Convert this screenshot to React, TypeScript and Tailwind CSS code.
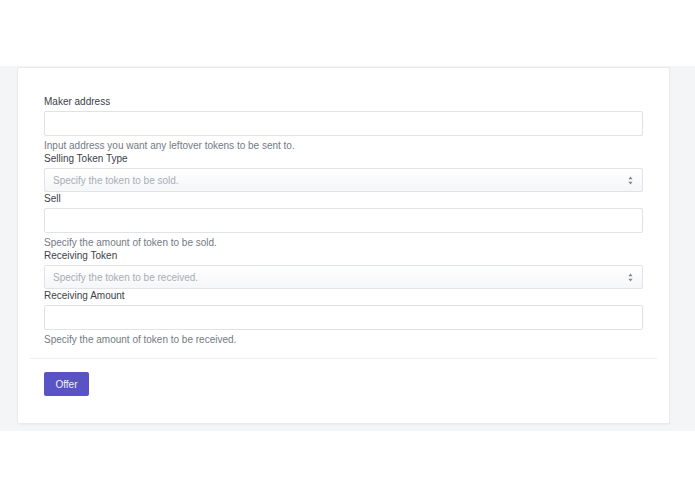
import React from "react";

function Arrows() {
  return (
    <svg width="5" height="9" viewBox="0 0 5 9" className="shrink-0">
      <path d="M2.5 0.5 L4.6 3.3 H0.4 Z" fill="#80858c" />
      <path d="M2.5 8.5 L4.6 5.7 H0.4 Z" fill="#80858c" />
    </svg>
  );
}

function Label({ children }: { children: React.ReactNode }) {
  return <div className="text-[10px] leading-[13px] text-[#3b4148] mb-[3px]">{children}</div>;
}

function Help({ children }: { children: React.ReactNode }) {
  return <div className="text-[10px] leading-[13px] text-[#737a83] mt-[3px]">{children}</div>;
}

function Input() {
  return <div className="h-[25px] border border-[#dfe2e6] rounded-[2px] bg-white" />;
}

function Select({ placeholder }: { placeholder: string }) {
  return (
    <div className="h-[24px] border border-[#e0e3e7] rounded-[2px] bg-gradient-to-b from-white to-[#f5f6f8] flex items-center justify-between pl-[8px] pr-[9px]">
      <span className="text-[10px] text-[#a7adb5]">{placeholder}</span>
      <Arrows />
    </div>
  );
}

export default function App() {
  return (
    <div className="w-[695px] h-[494px] bg-white" style={{ fontFamily: '"Liberation Sans", Arial, sans-serif' }}>
      <div className="h-[66px]" />
      <div className="bg-[#f4f5f7] pt-[1px] pb-[7px]">
        <div className="ml-[17px] w-[653px] bg-white border border-[#e9ebee] rounded-[2px] shadow-[0_1px_2px_rgba(0,0,0,0.04)] px-[12px]">
          <div className="px-[14px] pt-[27px]">
            <Label>Maker address</Label>
            <Input />
            <Help>Input address you want any leftover tokens to be sent to.</Help>
            <Label>Selling Token Type</Label>
            <Select placeholder="Specify the token to be sold." />
            <Label>Sell</Label>
            <Input />
            <Help>Specify the amount of token to be sold.</Help>
            <Label>Receiving Token</Label>
            <Select placeholder="Specify the token to be received." />
            <Label>Receiving Amount</Label>
            <Input />
            <Help>Specify the amount of token to be received.</Help>
          </div>
          <div className="mt-[12px] border-t border-[#eceef1] px-[14px] pt-[13px] pb-[27px]">
            <button className="h-[24px] w-[45px] rounded-[2px] bg-[#5a53c5] text-[#f3f2ff] text-[10px] flex items-center justify-center">
              Offer
            </button>
          </div>
        </div>
      </div>
    </div>
  );
}
